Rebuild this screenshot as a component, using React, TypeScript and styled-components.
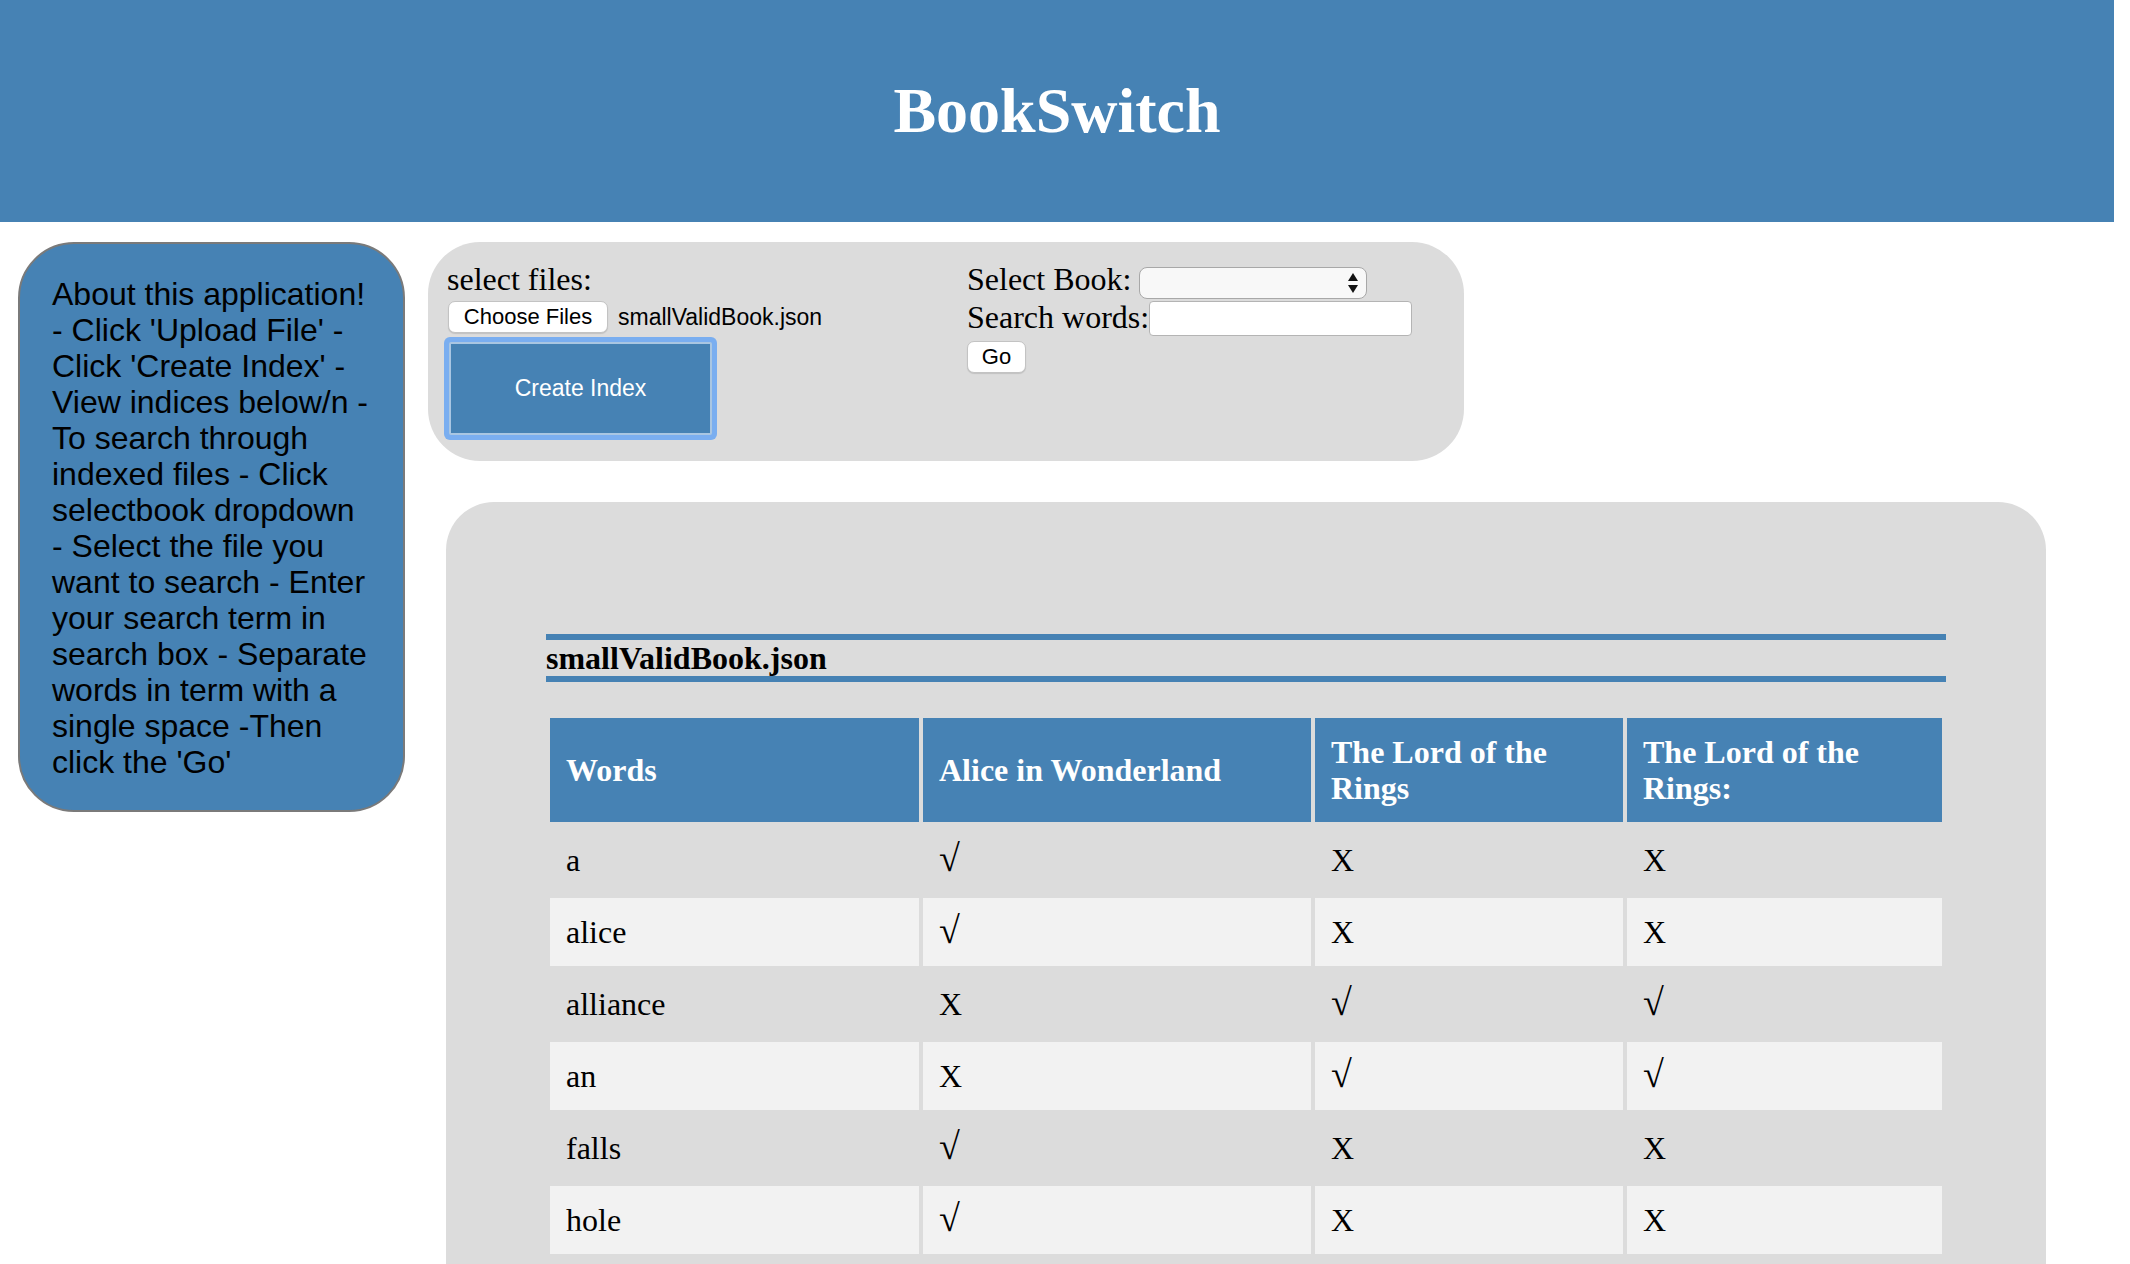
import styled, { createGlobalStyle } from "styled-components";

const BLUE = "#4682b4";
const PANEL = "#dcdcdc";
const SERIF = `"Liberation Serif", "Times New Roman", serif`;
const SANS = `"Liberation Sans", Arial, Helvetica, sans-serif`;

type Mark = "yes" | "no";

type WordRow = {
  word: string;
  marks: Mark[];
};

const books = ["Alice in Wonderland", "The Lord of the Rings", "The Lord of the Rings:"];
const columnWidths = [369, 388, 308, 315];

const rows: WordRow[] = [
  { word: "a", marks: ["yes", "no", "no"] },
  { word: "alice", marks: ["yes", "no", "no"] },
  { word: "alliance", marks: ["no", "yes", "yes"] },
  { word: "an", marks: ["no", "yes", "yes"] },
  { word: "falls", marks: ["yes", "no", "no"] },
  { word: "hole", marks: ["yes", "no", "no"] },
];

const aboutText =
  "About this application! - Click 'Upload File' - Click 'Create Index' - View indices below/n - To search through indexed files - Click selectbook dropdown - Select the file you want to search - Enter your search term in search box - Separate words in term with a single space -Then click the 'Go'";

function SelectArrows() {
  return (
    <svg width="10" height="20" viewBox="0 0 10 20">
      <path d="M5 0 L10 8 L0 8 Z" fill="#111" />
      <path d="M0 12 L10 12 L5 20 Z" fill="#111" />
    </svg>
  );
}

export default function App() {
  return (
    <>
      <GlobalStyle />
      <Header>
        <Title>BookSwitch</Title>
      </Header>
      <Layout>
        <AboutCard>{aboutText}</AboutCard>
        <Content>
          <ControlPanel>
            <FileColumn>
              <FieldLabel>select files:</FieldLabel>
              <FileRow>
                <FileButton type="button">Choose Files</FileButton>
                <FileName>smallValidBook.json</FileName>
              </FileRow>
              <CreateButton type="button">Create Index</CreateButton>
            </FileColumn>
            <SearchColumn>
              <FieldRow>
                <FieldLabel>Select Book:</FieldLabel>
                <SelectWrap>
                  <BookSelect defaultValue="">
                    <option value="" />
                  </BookSelect>
                  <ArrowSlot>
                    <SelectArrows />
                  </ArrowSlot>
                </SelectWrap>
              </FieldRow>
              <FieldRow>
                <FieldLabel>Search words:</FieldLabel>
                <SearchInput type="text" />
              </FieldRow>
              <GoButton type="button">Go</GoButton>
            </SearchColumn>
          </ControlPanel>

          <IndexPanel>
            <BookTitle>smallValidBook.json</BookTitle>
            <IndexTable>
              <colgroup>
                {columnWidths.map((w, i) => (
                  <col key={i} style={{ width: w }} />
                ))}
              </colgroup>
              <thead>
                <tr>
                  <HeadCell>Words</HeadCell>
                  {books.map((b) => (
                    <HeadCell key={b}>{b}</HeadCell>
                  ))}
                </tr>
              </thead>
              <tbody>
                {rows.map((r) => (
                  <BodyRow key={r.word}>
                    <Cell>{r.word}</Cell>
                    {r.marks.map((m, i) => (
                      <Cell key={i}>
                        <MarkGlyph $yes={m === "yes"}>{m === "yes" ? "√" : "X"}</MarkGlyph>
                      </Cell>
                    ))}
                  </BodyRow>
                ))}
              </tbody>
            </IndexTable>
          </IndexPanel>
        </Content>
      </Layout>
    </>
  );
}

const GlobalStyle = createGlobalStyle`
  * {
    box-sizing: border-box;
  }
  body {
    margin: 0;
    background: #fff;
    font-family: ${SERIF};
    color: #000;
  }
`;

const Header = styled.header`
  width: calc(100% - 16px);
  height: 222px;
  background: ${BLUE};
  display: flex;
  align-items: center;
  justify-content: center;
`;

const Title = styled.h1`
  margin: 0;
  font-family: ${SERIF};
  font-size: 64px;
  font-weight: bold;
  line-height: 1;
  color: #fff;
`;

const Layout = styled.main`
  display: flex;
  align-items: flex-start;
  gap: 23px;
  padding: 20px 0 0 18px;
`;

const AboutCard = styled.aside`
  flex: 0 0 387px;
  width: 387px;
  padding: 32px 33px 30px 32px;
  background: ${BLUE};
  border: 2px solid #7a7a7a;
  border-radius: 56px;
  font-family: ${SANS};
  font-size: 32px;
  line-height: 36px;
  color: #000;
`;

const Content = styled.div`
  display: flex;
  flex-direction: column;
`;

const ControlPanel = styled.section`
  width: 1036px;
  display: flex;
  padding: 19px 19px 26px;
  background: ${PANEL};
  border-radius: 52px;
`;

const FileColumn = styled.div`
  width: 520px;
  display: flex;
  flex-direction: column;
  align-items: flex-start;
`;

const FieldLabel = styled.span`
  font-family: ${SERIF};
  font-size: 32px;
  line-height: 36px;
  white-space: nowrap;
`;

const FileRow = styled.div`
  display: flex;
  align-items: center;
  gap: 10px;
  margin-top: 4px;
  margin-left: 1px;
`;

const FileButton = styled.button`
  width: 160px;
  height: 32px;
  padding: 0;
  background: #fff;
  border: 1px solid #c3c3c3;
  border-radius: 7px;
  box-shadow: 0 1px 1px rgba(0, 0, 0, 0.12);
  font-family: ${SANS};
  font-size: 22px;
  color: #000;
`;

const FileName = styled.span`
  font-family: ${SANS};
  font-size: 23px;
`;

const CreateButton = styled.button`
  width: 263px;
  height: 93px;
  margin: 9px 0 0 2px;
  background: ${BLUE};
  border: 2px solid #a9c6e2;
  border-radius: 2px;
  box-shadow: 0 0 0 5px #7aaef0;
  font-family: ${SANS};
  font-size: 23px;
  color: #fff;
`;

const SearchColumn = styled.div`
  display: flex;
  flex-direction: column;
  align-items: flex-start;
`;

const FieldRow = styled.div`
  display: flex;
  align-items: flex-start;
`;

const SelectWrap = styled.div`
  position: relative;
  margin: 6px 0 0 8px;
`;

const BookSelect = styled.select`
  appearance: none;
  display: block;
  width: 228px;
  height: 32px;
  background: #f8f8f8;
  border: 1px solid #a8a8a8;
  border-radius: 8px;
  font-family: ${SANS};
  font-size: 22px;
`;

const ArrowSlot = styled.span`
  position: absolute;
  right: 9px;
  top: 6px;
  pointer-events: none;
  display: flex;
`;

const SearchInput = styled.input`
  width: 263px;
  height: 35px;
  margin-top: 2px;
  background: #fff;
  border: 1px solid #b4b4b4;
  border-radius: 4px;
  font-size: 22px;
`;

const GoButton = styled.button`
  width: 59px;
  height: 32px;
  margin-top: 5px;
  padding: 0;
  background: #fff;
  border: 1px solid #c3c3c3;
  border-radius: 7px;
  box-shadow: 0 1px 1px rgba(0, 0, 0, 0.12);
  font-family: ${SANS};
  font-size: 22px;
  color: #000;
`;

const IndexPanel = styled.section`
  width: 1600px;
  min-height: 800px;
  margin: 41px 0 0 18px;
  padding: 132px 100px 40px;
  background: ${PANEL};
  border-radius: 48px 48px 0 0;
`;

const BookTitle = styled.h3`
  margin: 0 0 32px;
  border-top: 6px solid ${BLUE};
  border-bottom: 6px solid ${BLUE};
  font-family: ${SERIF};
  font-size: 32px;
  font-weight: bold;
  line-height: 36px;
`;

const IndexTable = styled.table`
  width: 1400px;
  table-layout: fixed;
  border-collapse: separate;
  border-spacing: 4px;
  margin: 0;
`;

const HeadCell = styled.th`
  padding: 16px;
  background: ${BLUE};
  color: #fff;
  text-align: left;
  vertical-align: middle;
  font-family: ${SERIF};
  font-size: 32px;
  font-weight: bold;
  line-height: 36px;
`;

const BodyRow = styled.tr`
  &:nth-child(even) {
    background: #f2f2f2;
  }
`;

const Cell = styled.td`
  padding: 16px;
  font-family: ${SERIF};
  font-size: 32px;
  line-height: 36px;
  vertical-align: middle;
`;

const MarkGlyph = styled.span<{ $yes: boolean }>`
  font-family: ${SERIF};
  font-size: ${(p) => (p.$yes ? "38px" : "32px")};
  line-height: 0;
`;
